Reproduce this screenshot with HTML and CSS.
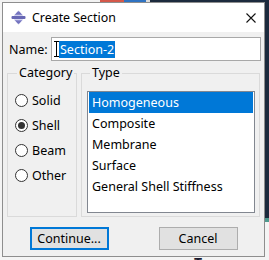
FILE: index.html
```html
<!DOCTYPE html>
<html lang="en">

<head>
    <meta charset="UTF-8">
    <title>Create Section</title>
    <link rel="stylesheet" href="styles.css">
</head>

<body>
    <div class="behind">Type</div>

    <div class="window">
        <div class="titlebar">
            <svg class="app_icon" width="15" height="15" viewBox="0 0 15 15">
                <defs>
                    <linearGradient id="icon_fill" x1="0" y1="0" x2="0" y2="1">
                        <stop offset="0" stop-color="#a9a9e0"/>
                        <stop offset="0.5" stop-color="#6a6ab8"/>
                        <stop offset="1" stop-color="#9c9cd8"/>
                    </linearGradient>
                </defs>
                <path d="M7.5 0.5 L12 5.5 H3 Z" fill="url(#icon_fill)"/>
                <rect x="0.5" y="6" width="14" height="3" rx="1" fill="#6767b4"/>
                <path d="M3 9.5 H12 L7.5 14.5 Z" fill="url(#icon_fill)"/>
            </svg>
            <span class="title">Create Section</span>
            <svg class="close_icon" width="10" height="10" viewBox="0 0 10 10">
                <path d="M0.5 0.5 L9.5 9.5 M9.5 0.5 L0.5 9.5" stroke="#111" stroke-width="1.1" fill="none"/>
            </svg>
        </div>

        <div class="name_row">
            <label class="name_label">Name:</label>
            <div class="name_input">
                <svg class="ibeam" width="5" height="16" viewBox="0 0 5 16">
                    <path d="M0 0.5 H5 M0 15.5 H5 M2.5 0 V16" stroke="#000" stroke-width="1" fill="none"/>
                </svg>
                <span class="selected_text">Section-2</span>
            </div>
        </div>

        <div class="groups">
            <fieldset class="group category_group">
                <legend>Category</legend>
                <label class="radio_row"><input type="radio" name="category"> Solid</label>
                <label class="radio_row"><input type="radio" name="category" checked> Shell</label>
                <label class="radio_row"><input type="radio" name="category"> Beam</label>
                <label class="radio_row"><input type="radio" name="category"> Other</label>
            </fieldset>

            <fieldset class="group type_group">
                <legend>Type</legend>
                <ul class="listbox">
                    <li class="selected">Homogeneous</li>
                    <li>Composite</li>
                    <li>Membrane</li>
                    <li>Surface</li>
                    <li>General Shell Stiffness</li>
                </ul>
            </fieldset>
        </div>

        <div class="buttons">
            <button class="btn btn_default">Continue...</button>
            <button class="btn">Cancel</button>
        </div>
    </div>
</body>

</html>
```

FILE: styles.css
```css
*{
    padding: 0px;
    margin: 0px;
    box-sizing: border-box;
    font-family: "Noto Sans", "Liberation Sans", Arial, sans-serif;
}

body{
    width: 269px;
    height: 260px;
    overflow: hidden;
    background:
        linear-gradient(to right, #f2f2f2 0 100px, #d4584a 100px 124px, #2f73c2 124px 146px, #dcdcdc 146px 150px, #1c2a3d 150px) top left / 100% 2px no-repeat,
        linear-gradient(#1c2a3d, #1c2a3d) right top / 5px 218px no-repeat,
        linear-gradient(#4f9a8e, #4f9a8e) right 0 top 218px / 5px 4px no-repeat,
        #f4f4f4;
    padding: 2px 0 0 2px;
}

.behind{
    position: absolute;
    left: 194px;
    top: 253px;
    z-index: -1;
    font-size: 14px;
    font-weight: bold;
    color: #1a1a2e;
}

.window{
    width: 263px;
    height: 255px;
    border: 1px solid #8e8e8e;
    background-color: #f0f0f0;
    display: flex;
    flex-direction: column;
}

/* title bar */
.titlebar{
    height: 29px;
    background-color: white;
    display: flex;
    align-items: center;
    padding: 0 8px 0 8px;
}

.app_icon{
    display: block;
}

.title{
    margin-left: 6px;
    font-size: 12.4px;
    color: #000;
    flex: 1;
}

.close_icon{
    display: block;
}

/* name */
.name_row{
    display: flex;
    align-items: center;
    padding: 5px 3px 0 6px;
}

.name_label{
    width: 42px;
    font-size: 12.5px;
    color: #000;
}

.name_input{
    flex: 1;
    height: 24px;
    border: 1px solid #a8a8a8;
    background-color: white;
    display: flex;
    align-items: center;
    padding-left: 2px;
    position: relative;
}

.ibeam{
    display: block;
}

.selected_text{
    background-color: #0078d7;
    color: white;
    font-size: 12.5px;
    line-height: 17px;
    padding: 0 1px;
}

/* groups */
.groups{
    display: flex;
    gap: 4px;
    padding: 5px 0 0 4px;
}

.group{
    border: 1px solid #dadada;
    height: 151px;
    padding: 0;
    min-width: 0;
}

.group legend{
    font-size: 12.5px;
    line-height: 14px;
    padding: 0 2px;
    margin-left: 3px;
    color: #000;
    white-space: nowrap;
}

.category_group{
    width: 70px;
    padding: 8px 0 0 7px;
}

.category_group legend{
    margin-left: 2px;
}

.radio_row{
    display: flex;
    align-items: center;
    height: 25px;
    font-size: 12.5px;
    gap: 4px;
    color: #000;
}

.radio_row input{
    appearance: none;
    width: 13px;
    height: 13px;
    border: 1px solid #333;
    border-radius: 50%;
    background-color: white;
    display: flex;
    align-items: center;
    justify-content: center;
}

.radio_row input:checked::after{
    content: "";
    width: 7px;
    height: 7px;
    border-radius: 50%;
    background-color: #333;
}

.type_group{
    width: 179px;
    padding: 11px 4px 3px 5px;
}

.listbox{
    list-style: none;
    height: 122px;
    border: 1px solid #828790;
    background-color: white;
    padding: 0 1px;
}

.listbox li{
    height: 21px;
    line-height: 21px;
    font-size: 12.5px;
    padding-left: 3px;
    color: #000;
}

.listbox li.selected{
    background-color: #0078d7;
    color: white;
}

/* buttons */
.buttons{
    display: flex;
    justify-content: center;
    gap: 50px;
    margin-top: 10px;
}

.btn{
    width: 79px;
    height: 23px;
    font-size: 12.5px;
    background-color: #e1e1e1;
    border: 1px solid #adadad;
    color: #000;
}

.btn_default{
    border: 2px solid #0078d7;
}
```
